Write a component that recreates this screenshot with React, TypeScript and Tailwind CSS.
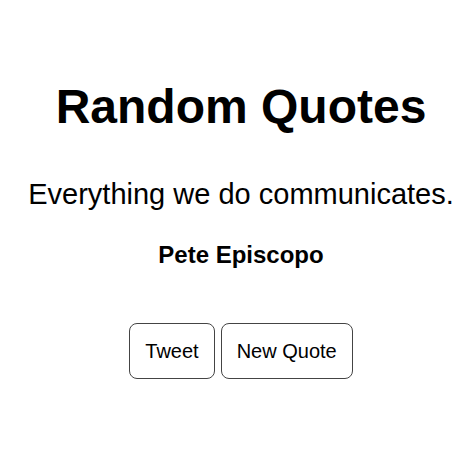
export default function App() {
  return (
    <div
      className="w-[474px] h-[474px] bg-white text-black flex flex-col items-center pl-[8px]"
      style={{ fontFamily: '"Liberation Sans", Arial, sans-serif' }}
    >
      <h1 className="mt-[79px] text-[48px] font-bold leading-[55px]">Random Quotes</h1>
      <p className="mt-[44px] text-[29px] leading-[33px]">Everything we do communicates.</p>
      <h2 className="mt-[30px] text-[24px] font-bold leading-[28px]">Pete Episcopo</h2>
      <div className="mt-[54px] flex gap-[6px]">
        <button className="px-[15px] py-[15px] text-[20px] leading-[24px] border border-[#444] rounded-[8px] bg-white">
          Tweet
        </button>
        <button className="px-[15px] py-[15px] text-[20px] leading-[24px] border border-[#444] rounded-[8px] bg-white">
          New Quote
        </button>
      </div>
    </div>
  );
}
